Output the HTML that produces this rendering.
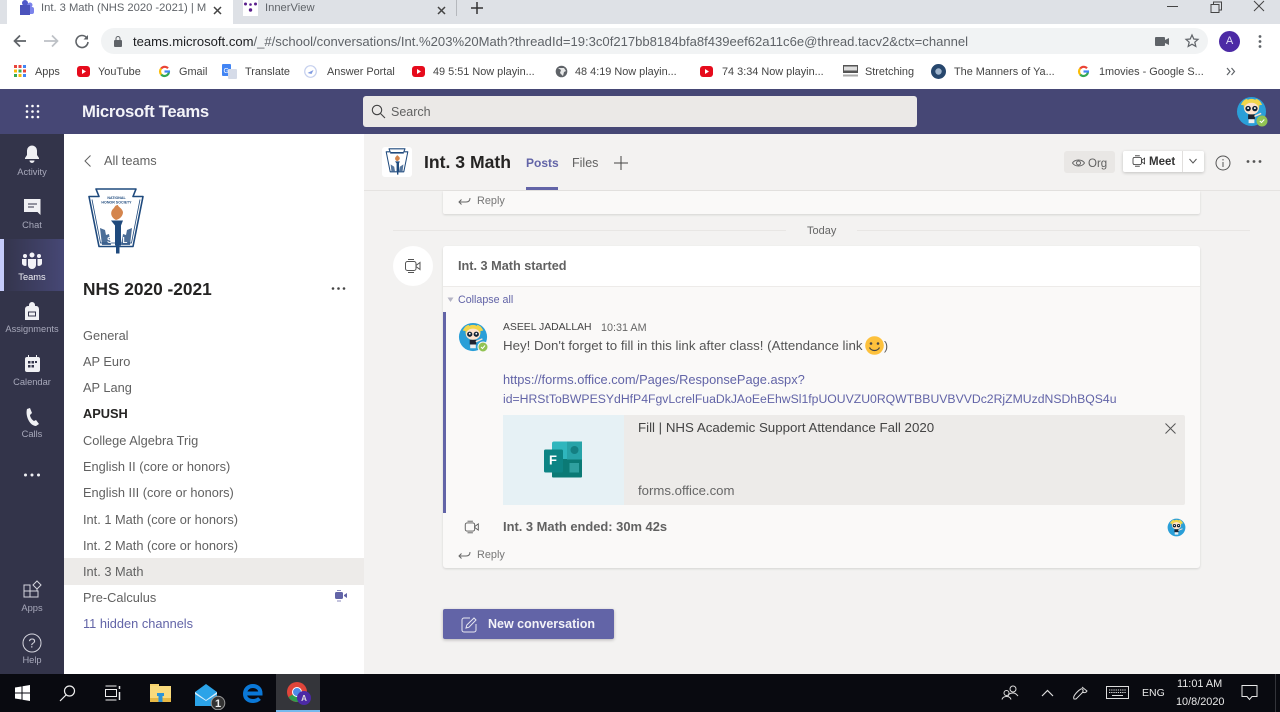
<!DOCTYPE html>
<html><head><meta charset="utf-8"><title>Int. 3 Math</title>
<style>
html,body{margin:0;padding:0;width:1280px;height:712px;overflow:hidden;background:#f3f2f1}
#r{position:relative;width:1280px;height:712px;overflow:hidden;font-family:"Liberation Sans",sans-serif;filter:blur(.35px)}
#r div,#r span.t,#r svg{position:absolute}
.t{position:absolute;white-space:nowrap;line-height:16px;font-size:12px;color:#444}
.c{transform:translateX(-50%);font-size:9.300px;color:#a8a9bb;line-height:12px}
.ch{font-size:12.800px;color:#616161;left:83px}
.bm{font-size:10.900px;color:#444;top:64px}
</style></head><body><div id="r">
<svg width="0" height="0"><defs>
<symbol id="bub" viewBox="0 0 32 32">
<circle cx="16" cy="16" r="15" fill="#2a9fd8"/>
<path d="M5 9q3-6 7-6l-2 7zM27 9q-3-6-7-6l2 7z" fill="#f2d64b"/>
<circle cx="16" cy="11" r="8" fill="#f2d64b"/>
<ellipse cx="16" cy="13" rx="7.500" ry="6" fill="#fde3cf"/>
<circle cx="12.500" cy="13" r="2.800" fill="#123"/><circle cx="19.500" cy="13" r="2.800" fill="#123"/>
<circle cx="12.500" cy="12.500" r="1" fill="#fff"/><circle cx="19.500" cy="12.500" r="1" fill="#fff"/>
<rect x="12.500" y="19" width="7" height="5" fill="#1d2230"/><rect x="13" y="24" width="6" height="4" fill="#eee"/>
<path d="M19 21l7-3" stroke="#fde3cf" stroke-width="1.500"/>
</symbol>
<symbol id="cam" viewBox="0 0 20 20">
<rect x="2.500" y="5.500" width="10.500" height="9" rx="2" fill="none" stroke="currentColor" stroke-width="1"/>
<path d="M17 6.500v7l-4-3v-1zM5 3.500h6M5 16.500h6" fill="none" stroke="currentColor" stroke-width="1"/>
</symbol>
<symbol id="reply" viewBox="0 0 14 12"><path d="M13 3c0 3-1.500 4-4 4H2M4.500 4.500L2 7l2.500 2.500" fill="none" stroke="#666" stroke-width="1"/></symbol>
</defs></svg>

<!-- Chrome tab strip -->
<div style="left:0;top:0;width:1280px;height:24px;background:#dee1e6"></div>
<div style="left:7px;top:0;width:226px;height:24px;background:#fff"></div>
<svg style="left:18px;top:0" width="16" height="17" viewBox="0 0 16 17"><circle cx="12" cy="5" r="2.500" fill="#7b83eb"/><rect x="8" y="7" width="8" height="7" rx="2" fill="#7b83eb"/><circle cx="7" cy="3" r="3" fill="#5059c9"/><rect x="2" y="5" width="10" height="10" fill="#4b53bc"/></svg>
<span class="t" style="left:41px;top:0;font-size:11.200px;color:#5f6368;width:165px;overflow:hidden">Int. 3 Math (NHS 2020 -2021) | M</span>
<svg style="left:212px;top:5px" width="11" height="11"><path d="M2 2l7 7M9 2l-7 7" stroke="#444" stroke-width="1.500"/></svg>
<div style="left:243px;top:0;width:15px;height:16px;background:#fff"></div>
<svg style="left:243px;top:1px" width="15" height="13"><circle cx="7.500" cy="9" r="1.700" fill="#5b1f8c"/><circle cx="2.500" cy="3" r="1.500" fill="#5b1f8c"/><circle cx="12.500" cy="3" r="1.500" fill="#5b1f8c"/><circle cx="7.500" cy="3.500" r="1.300" fill="#5b1f8c"/></svg>
<span class="t" style="left:265px;top:0;font-size:11.200px;color:#5f6368">InnerView</span>
<svg style="left:436px;top:5px" width="11" height="11"><path d="M2 2l7 7M9 2l-7 7" stroke="#444" stroke-width="1.500"/></svg>
<div style="left:456px;top:0;width:1px;height:16px;background:#b5b8bd"></div>
<svg style="left:470px;top:1px" width="14" height="14"><path d="M7 1v12M1 7h12" stroke="#333" stroke-width="1.500"/></svg>
<svg style="left:1165px;top:0" width="110" height="14" fill="none" stroke="#444"><path d="M2 6.500h11"/><path d="M46 4.500h8v8h-8zM48.500 4.500V2h8v8H54"/><path d="M89 1l10 10M99 1L89 11"/></svg>

<!-- toolbar -->
<div style="left:0;top:24px;width:1280px;height:65px;background:#fff"></div>
<svg style="left:10px;top:31px" width="60" height="20" fill="none" stroke-width="1.700"><path d="M16 10H5M10 4.500L4.500 10 10 15.500" stroke="#5f6368"/><path d="M34 10h13M42 4.500l5.500 5.500-5.500 5.500" stroke="#bdc1c6"/></svg>
<svg style="left:72px;top:33px" width="20" height="18" fill="none" stroke="#5f6368" stroke-width="1.600"><path d="M14.500 4.500A6 6 0 1 0 16 9"/><path d="M16 2v4.500h-4.500z" fill="#5f6368" stroke="none"/></svg>
<div style="left:101px;top:28px;width:1107px;height:26px;background:#f1f3f4;border-radius:13px"></div>
<svg style="left:113px;top:36px" width="10" height="11" fill="#5f6368"><rect x="1" y="4" width="8" height="7" rx="1"/><path d="M3 4V2.500a2 2 0 0 1 4 0V4" fill="none" stroke="#5f6368"/></svg>
<span class="t" style="left:133px;top:34px;font-size:13.070px;color:#5f6368"><span style="color:#202124">teams.microsoft.com</span>/_#/school/conversations/Int.%203%20Math?threadId=19:3c0f217bb8184bfa8f439eef62a11c6e@thread.tacv2&amp;ctx=channel</span>
<svg style="left:1155px;top:36px" width="15" height="11" fill="#5f6368"><rect x="0" y="1" width="10" height="9" rx="1"/><path d="M10 4l4-2v7l-4-2z"/></svg>
<svg style="left:1184px;top:33px" width="16" height="16" fill="none" stroke="#5f6368" stroke-width="1.200"><path d="M8 2l1.800 4 4.200.4-3.200 2.800 1 4.200L8 11.200 4.200 13.400l1-4.200L2 6.400 6.200 6z"/></svg>
<div style="left:1219px;top:31px;width:21px;height:21px;border-radius:50%;background:#4c2aa5;color:#e0dcf5;font-size:11px;line-height:21px;text-align:center">A</div>
<svg style="left:1258px;top:34px" width="4" height="15" fill="#5f6368"><circle cx="2" cy="2.500" r="1.400"/><circle cx="2" cy="7.500" r="1.400"/><circle cx="2" cy="12.500" r="1.400"/></svg>

<!-- bookmarks -->
<svg style="left:14px;top:65px" width="12" height="12"><g fill="#e8453c"><rect width="3" height="3"/><rect x="4.500" width="3" height="3"/></g><rect x="9" width="3" height="3" fill="#4285f4"/><rect y="4.500" width="3" height="3" fill="#fbbc05"/><rect x="4.500" y="4.500" width="3" height="3" fill="#34a853"/><rect x="9" y="4.500" width="3" height="3" fill="#e8453c"/><rect y="9" width="3" height="3" fill="#34a853"/><rect x="4.500" y="9" width="3" height="3" fill="#fbbc05"/><rect x="9" y="9" width="3" height="3" fill="#4285f4"/></svg>
<span class="t bm" style="left:35px">Apps</span>
<svg style="left:77px;top:66px" width="13" height="11"><rect width="13" height="11" rx="3" fill="#e60b1c"/><path d="M5 3l4 2.500L5 8z" fill="#fff"/></svg>
<span class="t bm" style="left:98px">YouTube</span>
<svg style="left:158px;top:65px" width="13" height="13" fill="none" stroke-width="2.200" viewBox="0 0 13 13"><path d="M11 6.500a4.500 4.500 0 0 1-7.800 3" stroke="#34a853"/><path d="M3.200 9.500a4.500 4.500 0 0 1 0-6" stroke="#fbbc05"/><path d="M3.200 3.500a4.500 4.500 0 0 1 6.800-.3" stroke="#ea4335"/><path d="M6.500 6.500H12" stroke="#4285f4"/></svg>
<span class="t bm" style="left:179px">Gmail</span>
<svg style="left:222px;top:64px" width="15" height="15"><rect width="9" height="12" rx="1" fill="#4285f4"/><rect x="6" y="5" width="9" height="10" rx="1" fill="#d5dbe8"/><text x="1.500" y="9" font-size="7" fill="#fff" font-family="Liberation Sans">G</text></svg>
<span class="t bm" style="left:245px">Translate</span>
<svg style="left:304px;top:65px" width="13" height="13" fill="none"><circle cx="6.500" cy="6.500" r="5.800" stroke="#c5d0ee" stroke-width="1.200"/><path d="M3.500 8l6-3-2 4z" fill="#7f9ae0"/></svg>
<span class="t bm" style="left:327px">Answer Portal</span>
<svg style="left:412px;top:66px" width="13" height="11"><rect width="13" height="11" rx="3" fill="#e60b1c"/><path d="M5 3l4 2.500L5 8z" fill="#fff"/></svg>
<span class="t bm" style="left:433px">49 5:51 Now playin...</span>
<svg style="left:555px;top:65px" width="13" height="13"><circle cx="6.500" cy="6.500" r="5.800" fill="#5f6368"/><path d="M3 3l3 2-1 3 3 3 1-4 2-1-2-3z" fill="#fff" opacity=".85"/></svg>
<span class="t bm" style="left:575px">48 4:19 Now playin...</span>
<svg style="left:700px;top:66px" width="13" height="11"><rect width="13" height="11" rx="3" fill="#e60b1c"/><path d="M5 3l4 2.500L5 8z" fill="#fff"/></svg>
<span class="t bm" style="left:722px">74 3:34 Now playin...</span>
<svg style="left:843px;top:65px" width="15" height="12"><rect width="15" height="8" fill="#555"/><rect x="1" y="1.500" width="13" height="4" fill="#ddd"/><rect y="9.500" width="15" height="2" fill="#aaa"/></svg>
<span class="t bm" style="left:865px">Stretching</span>
<svg style="left:931px;top:64px" width="15" height="15"><circle cx="7.500" cy="7.500" r="7.500" fill="#27476d"/><circle cx="7.500" cy="7.500" r="3.200" fill="#9fb4cc"/></svg>
<span class="t bm" style="left:954px">The Manners of Ya...</span>
<svg style="left:1077px;top:65px" width="13" height="13" fill="none" stroke-width="2.200" viewBox="0 0 13 13"><path d="M11 6.500a4.500 4.500 0 0 1-7.800 3" stroke="#34a853"/><path d="M3.200 9.500a4.500 4.500 0 0 1 0-6" stroke="#fbbc05"/><path d="M3.200 3.500a4.500 4.500 0 0 1 6.800-.3" stroke="#ea4335"/><path d="M6.500 6.500H12" stroke="#4285f4"/></svg>
<span class="t bm" style="left:1099px">1movies - Google S...</span>
<svg style="left:1226px;top:67px" width="10" height="9" fill="none" stroke="#5f6368" stroke-width="1.200"><path d="M1 1l3 3.500L1 8M5.500 1l3 3.500L5.500 8"/></svg>

<!-- Teams header -->
<div style="left:0;top:89px;width:1280px;height:45px;background:#464775"></div>
<svg style="left:25px;top:104px" width="15" height="15" fill="#fff"><circle cx="2" cy="2" r="1.300"/><circle cx="7.500" cy="2" r="1.300"/><circle cx="13" cy="2" r="1.300"/><circle cx="2" cy="7.500" r="1.300"/><circle cx="7.500" cy="7.500" r="1.300"/><circle cx="13" cy="7.500" r="1.300"/><circle cx="2" cy="13" r="1.300"/><circle cx="7.500" cy="13" r="1.300"/><circle cx="13" cy="13" r="1.300"/></svg>
<span class="t" style="left:82px;top:104px;font-size:16.700px;font-weight:bold;color:#f3f3f8;letter-spacing:-.3px">Microsoft Teams</span>
<div style="left:363px;top:96px;width:554px;height:31px;background:#ebe9e7;border-radius:3px"></div>
<svg style="left:371px;top:104px" width="15" height="15" fill="none" stroke="#444" stroke-width="1.100"><circle cx="6" cy="6" r="4.700"/><path d="M9.500 9.500l4.500 4.500"/></svg>
<span class="t" style="left:391px;top:104px;font-size:12.500px;color:#616161">Search</span>
<svg style="left:1236px;top:96px" width="32" height="32"><use href="#bub" width="31" height="31"/><circle cx="26" cy="25" r="5.500" fill="#92c353"/><path d="M23.800 25l1.700 1.500 2.800-3" stroke="#fff" fill="none"/></svg>

<!-- left rail -->
<div style="left:0;top:134px;width:64px;height:540px;background:#33344a"></div>
<div style="left:0;top:239px;width:64px;height:52px;background:linear-gradient(90deg,#33344a,#464775)"></div>
<div style="left:0;top:239px;width:4px;height:52px;background:#c5cbfa"></div>
<svg style="left:22px;top:144px" width="20" height="20" fill="#f0f0f4"><path d="M10 1.500a5 5 0 0 0-5 5V11l-2 3v1h14v-1l-2-3V6.500a5 5 0 0 0-5-5zM7.500 16.500a2.500 2.500 0 0 0 5 0z"/></svg>
<span class="t c" style="left:32px;top:166px">Activity</span>
<svg style="left:22px;top:198px" width="20" height="20" fill="#f0f0f4"><path d="M2 1h16.500v16l-3-3H2z"/><path d="M6 6h9M6 9h6" stroke="#33344a" stroke-width="1"/></svg>
<span class="t c" style="left:32px;top:219px">Chat</span>
<svg style="left:21px;top:252px" width="22" height="17" fill="#f4f4f8"><circle cx="11" cy="3" r="2.500"/><circle cx="4" cy="4" r="2"/><circle cx="18" cy="4" r="2"/><path d="M7 7h8v6a4 4 0 0 1-8 0zM1 7h4.500v6.500A3 3 0 0 1 1 10.500zM21 7h-4.500v6.500A3 3 0 0 0 21 10.500z"/></svg>
<span class="t c" style="left:32px;top:271px;color:#f1f1f5">Teams</span>
<svg style="left:24px;top:302px" width="16" height="20" fill="#f0f0f4"><path d="M5 4V3a3 3 0 0 1 6 0v1h.5A3 3 0 0 1 15 7v11H1V7a3 3 0 0 1 3-3z"/><rect x="4.500" y="10" width="7" height="4" fill="none" stroke="#33344a"/></svg>
<span class="t c" style="left:32px;top:323px">Assignments</span>
<svg style="left:24px;top:355px" width="17" height="18" fill="#f0f0f4"><path d="M3 2h1V0h1v2h7V0h1v2h1a2 2 0 0 1 2 2v11a2 2 0 0 1-2 2H3a2 2 0 0 1-2-2V4a2 2 0 0 1 2-2z"/><g fill="#33344a"><rect x="4" y="6" width="2.500" height="2.500"/><rect x="7.500" y="6" width="2.500" height="2.500"/><rect x="11" y="6" width="2" height="2"/><rect x="4" y="10" width="2.500" height="2.500"/><rect x="7.500" y="10" width="2.500" height="2.500"/></g></svg>
<span class="t c" style="left:32px;top:376px">Calendar</span>
<svg style="left:25px;top:408px" width="14" height="18" fill="#f0f0f4"><path d="M2 1l3-1 2 5-2 2c0 2 2 5 4 6l2-1 3 4-3 2C5 18 0 8 2 1z"/></svg>
<span class="t c" style="left:32px;top:428px">Calls</span>
<svg style="left:23px;top:472px" width="18" height="6" fill="#f0f0f4"><circle cx="2.500" cy="3" r="1.500"/><circle cx="9" cy="3" r="1.500"/><circle cx="15.500" cy="3" r="1.500"/></svg>
<svg style="left:22px;top:580px" width="20" height="20" fill="none" stroke="#d5d5de" stroke-width="1"><path d="M2 5h6v6H2zM8 11h8v6H8zM2 11h6v6H2zM8 5v6h7V9"/><path d="M15 1l4 4-4 4-4-4z"/></svg>
<span class="t c" style="left:32px;top:602px">Apps</span>
<svg style="left:22px;top:633px" width="20" height="20" fill="none" stroke="#d5d5de" stroke-width="1"><circle cx="10" cy="10" r="9"/><text x="10" y="14.500" text-anchor="middle" font-size="13" fill="#d5d5de" stroke="none" font-family="Liberation Sans">?</text></svg>
<span class="t c" style="left:32px;top:654px">Help</span>

<!-- sidebar -->
<div style="left:64px;top:134px;width:300px;height:540px;background:#fff"></div>
<svg style="left:83px;top:154px" width="10" height="14" fill="none" stroke="#616161"><path d="M7.500 1.500L2 7l5.500 5.500"/></svg>
<span class="t" style="left:104px;top:153px;font-size:12.800px;color:#616161">All teams</span>
<svg style="left:87px;top:187px" width="58" height="70" viewBox="87 187 58 70">
<path d="M96 189h40l-3 7.500h10l-10 50H99l-10-50h10z" fill="#fff" stroke="#1f4a7d" stroke-width="1.600" stroke-linejoin="round"/>
<path d="M92 199.500l8.500 43.500h31l8.500-43.500" fill="none" stroke="#1f4a7d" stroke-width=".8"/>
<text x="116.500" y="199" font-size="3.600" font-weight="bold" text-anchor="middle" fill="#1f4a7d" font-family="Liberation Sans">NATIONAL</text>
<text x="116.500" y="203.500" font-size="3.600" font-weight="bold" text-anchor="middle" fill="#1f4a7d" font-family="Liberation Sans">HONOR SOCIETY</text>
<path d="M116 220c-6-3-6-9-2-12 1-2 2-3 4-3 0 2 4 3 5 7 0 4-3 7-7 8z" fill="#d4854d"/>
<path d="M111 220.500h12l-2 5v20h-1.500v8h-3.500v-8H115v-20z" fill="#1f4a7d"/>
<path d="M100 228l5 2 1 5 3-1 2 11h-9zM132 228l-5 2-1 5-3-1-2 11h9z" fill="#1f4a7d" opacity=".8"/>
<text x="107" y="243" font-size="8" fill="#fff" font-family="Liberation Sans" font-weight="bold">S</text>
<text x="122.500" y="243" font-size="8" fill="#fff" font-family="Liberation Sans" font-weight="bold">L</text>
</svg>
<span class="t" style="left:83px;top:280px;font-size:17.300px;font-weight:bold;color:#252423;line-height:18px">NHS 2020 -2021</span>
<svg style="left:331px;top:286px" width="15" height="5" fill="#444"><circle cx="2" cy="2.500" r="1.300"/><circle cx="7.500" cy="2.500" r="1.300"/><circle cx="13" cy="2.500" r="1.300"/></svg>
<span class="t ch" style="top:328px">General</span>
<span class="t ch" style="top:354px">AP Euro</span>
<span class="t ch" style="top:380px">AP Lang</span>
<span class="t ch" style="top:406px;font-weight:bold;color:#252423">APUSH</span>
<span class="t ch" style="top:433px">College Algebra Trig</span>
<span class="t ch" style="top:459px">English II (core or honors)</span>
<span class="t ch" style="top:485px">English III (core or honors)</span>
<span class="t ch" style="top:512px">Int. 1 Math (core or honors)</span>
<span class="t ch" style="top:538px">Int. 2 Math (core or honors)</span>
<div style="left:64px;top:558px;width:300px;height:27px;background:#edebe9"></div>
<span class="t ch" style="top:564px">Int. 3 Math</span>
<span class="t ch" style="top:590px">Pre-Calculus</span>
<svg style="left:334px;top:589px" width="14" height="14" fill="#6264a7"><rect x="1" y="3" width="8" height="7" rx="1.500"/><path d="M10 6l3-2v5l-3-2z"/><path d="M3 1.500h4M3 12h4" stroke="#6264a7" stroke-width=".8"/></svg>
<span class="t ch" style="top:616px;color:#6264a7">11 hidden channels</span>

<!-- main header -->
<div style="left:364px;top:190px;width:916px;height:1px;background:#e5e3e1"></div>
<div style="left:382px;top:147px;width:30px;height:30px;background:#fff;border-radius:3px"></div>
<svg style="left:385px;top:148px" width="24" height="28" viewBox="87 187 58 70">
<path d="M96 189h40l-3 7.500h10l-10 50H99l-10-50h10z" fill="#fff" stroke="#1f4a7d" stroke-width="2.600" stroke-linejoin="round"/>
<path d="M99 199h34" stroke="#1f4a7d" stroke-width="4"/>
<path d="M116 220c-6-3-6-9-2-12 1-2 2-3 4-3 0 2 4 3 5 7 0 4-3 7-7 8z" fill="#d4854d"/>
<path d="M111 220.500h12l-2 5v20h-1.500v8h-3.500v-8H115v-20z" fill="#1f4a7d"/>
<path d="M100 228l9 6 2 11h-9zM132 228l-9 6-2 11h9z" fill="#1f4a7d" opacity=".75"/>
</svg>
<span class="t" style="left:424px;top:153px;font-size:17.600px;font-weight:bold;color:#252423;line-height:18px">Int. 3 Math</span>
<span class="t" style="left:526px;top:155px;font-size:12px;font-weight:bold;color:#6264a7">Posts</span>
<div style="left:526px;top:187px;width:32px;height:3px;background:#6264a7"></div>
<span class="t" style="left:572px;top:155px;font-size:12.500px;color:#616161">Files</span>
<svg style="left:614px;top:156px" width="14" height="14" stroke="#444"><path d="M7 0v14M0 7h14"/></svg>

<div style="left:1064px;top:151px;width:51px;height:22px;background:#e9e7e5;border-radius:3px"></div>
<svg style="left:1072px;top:157px" width="13" height="12" fill="none" stroke="#666"><path d="M.5 6C3 2 10 2 12.500 6 10 10 3 10 .5 6z"/><circle cx="6.500" cy="6" r="2"/></svg>
<span class="t" style="left:1088px;top:156px;font-size:11.500px;color:#616161">Org</span>
<div style="left:1123px;top:151px;width:81px;height:21px;background:#fff;border-radius:2px;box-shadow:0 1px 3px rgba(0,0,0,.2)"></div>
<div style="left:1182px;top:151px;width:1px;height:21px;background:#e1dfdd"></div>
<svg style="left:1131px;top:153px;color:#333" width="16" height="16"><use href="#cam" width="16" height="16"/></svg>
<span class="t" style="left:1149px;top:154px;font-size:11.500px;font-weight:bold;color:#333">Meet</span>
<svg style="left:1188px;top:158px" width="10" height="7" fill="none" stroke="#555"><path d="M1.500 1l3.500 4 3.500-4"/></svg>
<svg style="left:1215px;top:155px" width="16" height="16" fill="none" stroke="#555"><circle cx="8" cy="8" r="7"/><path d="M8 7v5M8 4v1.500"/></svg>
<svg style="left:1246px;top:159px" width="16" height="5" fill="#555"><circle cx="2" cy="2.500" r="1.400"/><circle cx="8" cy="2.500" r="1.400"/><circle cx="14" cy="2.500" r="1.400"/></svg>

<!-- previous card -->
<div style="left:443px;top:191px;width:757px;height:23px;background:#faf9f8;box-shadow:0 1px 2px rgba(0,0,0,.13);border-radius:0 0 2px 2px"></div>
<svg style="left:457px;top:195px" width="14" height="12"><use href="#reply"/></svg>
<span class="t" style="left:477px;top:193px;font-size:10.900px;color:#777">Reply</span>
<div style="left:393px;top:230px;width:393px;height:1px;background:#e8e6e4"></div>
<div style="left:857px;top:230px;width:393px;height:1px;background:#e8e6e4"></div>
<span class="t" style="left:807px;top:223px;font-size:11px;color:#666">Today</span>

<!-- main card -->
<div style="left:393px;top:246px;width:40px;height:40px;border-radius:50%;background:#fff"></div>
<svg style="left:403px;top:256px;color:#555" width="20" height="20"><use href="#cam" width="20" height="20"/></svg>
<div style="left:443px;top:246px;width:757px;height:322px;background:#faf9f8;border-radius:3px;box-shadow:0 1px 2px rgba(0,0,0,.13)"></div>
<div style="left:443px;top:246px;width:757px;height:40px;background:#fff;border-bottom:1px solid #edebe9;border-radius:3px 3px 0 0"></div>
<span class="t" style="left:458px;top:258px;font-size:12.700px;font-weight:bold;color:#616161">Int. 3 Math started</span>
<svg style="left:447px;top:297px" width="8" height="6"><path d="M.5.500h6L3.500 5z" fill="#b5b5c5"/></svg>
<span class="t" style="left:458px;top:292px;font-size:10.700px;color:#6264a7">Collapse all</span>
<div style="left:443px;top:312px;width:3px;height:201px;background:#6264a7"></div>
<svg style="left:458px;top:322px" width="32" height="32"><use href="#bub" width="30" height="30"/><circle cx="25" cy="25" r="5" fill="#92c353" stroke="#faf9f8" stroke-width="1"/><path d="M23 25l1.500 1.500 2.500-3" stroke="#fff" fill="none"/></svg>
<span class="t" style="left:503px;top:320px;font-size:10.400px;color:#444">ASEEL JADALLAH</span>
<span class="t" style="left:601px;top:320px;font-size:10.800px;color:#666">10:31 AM</span>
<span class="t" style="left:503px;top:338px;font-size:13.300px;color:#555">Hey! Don't forget to fill in this link after class! (Attendance link</span>
<svg style="left:865px;top:336px" width="19" height="19"><circle cx="9.500" cy="9.500" r="9.300" fill="#fdc13c"/><circle cx="6" cy="7.500" r="1.300" fill="#444"/><circle cx="13" cy="7.500" r="1.300" fill="#444"/><path d="M4.500 11.500c2 4 8 4 10 0" fill="none" stroke="#444" stroke-width="1.200"/></svg>
<span class="t" style="left:884px;top:338px;font-size:12.200px;color:#555">)</span>
<span class="t" style="left:503px;top:372px;font-size:12.850px;color:#6264a7">https://forms.office.com/Pages/ResponsePage.aspx?</span>
<span class="t" style="left:503px;top:391px;font-size:12.230px;color:#6264a7">id=HRStToBWPESYdHfP4FgvLcrelFuaDkJAoEeEhwSl1fpUOUVZU0RQWTBBUVBVVDc2RjZMUzdNSDhBQS4u</span>
<div style="left:503px;top:415px;width:682px;height:90px;background:#edebe9;border-radius:2px"></div>
<div style="left:503px;top:415px;width:121px;height:90px;background:#e6f1f5"></div>
<svg style="left:543px;top:441px" width="40" height="38" viewBox="0 0 40 38"><rect x="9" y="0.500" width="30" height="36" rx="2" fill="#2fb6bd"/><rect x="9" y="18" width="30" height="18.500" rx="1" fill="#0b7a75"/><rect x="24" y="0.500" width="15" height="18" fill="#27a3a8"/><circle cx="31.500" cy="9" r="4" fill="#147f82"/><rect x="26.500" y="22" width="9.500" height="9.500" fill="#2fa09f"/><rect x="1" y="8.500" width="19" height="23" rx="1.500" fill="#0d8484"/><text x="6" y="23.500" font-size="13" font-weight="bold" fill="#fff" font-family="Liberation Sans">F</text></svg>
<span class="t" style="left:638px;top:420px;font-size:13.300px;color:#444">Fill | NHS Academic Support Attendance Fall 2020</span>
<span class="t" style="left:638px;top:483px;font-size:13.200px;color:#666">forms.office.com</span>
<svg style="left:1165px;top:423px" width="11" height="11" stroke="#555"><path d="M.5.500l10 10M10.500.500l-10 10"/></svg>
<svg style="left:463px;top:518px;color:#555" width="18" height="18"><use href="#cam" width="18" height="18"/></svg>
<span class="t" style="left:503px;top:519px;font-size:12.900px;font-weight:bold;color:#616161">Int. 3 Math ended: 30m 42s</span>
<svg style="left:1167px;top:518px" width="19" height="19"><use href="#bub" width="19" height="19"/></svg>
<svg style="left:457px;top:549px" width="14" height="12"><use href="#reply"/></svg>
<span class="t" style="left:477px;top:547px;font-size:10.900px;color:#777">Reply</span>

<!-- new conversation -->
<div style="left:443px;top:609px;width:171px;height:30px;background:#6264a7;border-radius:2px;box-shadow:0 1px 3px rgba(0,0,0,.25)"></div>
<svg style="left:461px;top:616px" width="17" height="17" fill="none" stroke="#e8e8f2"><path d="M9 2H3a2 2 0 0 0-2 2v10a2 2 0 0 0 2 2h10a2 2 0 0 0 2-2V8"/><path d="M5 12l.8-3L13 2l2 2-7 7.200z"/></svg>
<span class="t" style="left:488px;top:616px;font-size:12.500px;font-weight:bold;color:#f3f3f8">New conversation</span>

<!-- taskbar -->
<div style="left:0;top:674px;width:1280px;height:38px;background:#090a10"></div>
<div style="left:276px;top:674px;width:44px;height:38px;background:#34353a"></div>
<div style="left:276px;top:710px;width:44px;height:2px;background:#76b9ed"></div>
<svg style="left:15px;top:685px" width="15" height="16" fill="#fff"><path d="M0 2.500l6.500-1V7.500H0zM7.500 1.300L15 0v7.500H7.500zM0 8.500h6.500v6L0 13.500zM7.500 8.500H15V16l-7.500-1.200z"/></svg>
<svg style="left:59px;top:685px" width="17" height="17" fill="none" stroke="#eee" stroke-width="1.200"><circle cx="10.500" cy="6" r="5"/><path d="M7 10l-6 6"/></svg>
<svg style="left:104px;top:685px" width="17" height="16" fill="none" stroke="#eee"><path d="M1.500 1h11M1.500 15h11M1.500 4.500h11v7h-11z"/><path d="M15.500 1v3M15.500 7v8" stroke-width="1.500"/></svg>
<svg style="left:150px;top:684px" width="21" height="18"><rect x="0" y="0" width="9" height="4" fill="#f6d26b"/><rect y="2" width="21" height="16" fill="#f9da7c"/><rect x="0" y="14" width="21" height="4" fill="#e8b945"/><rect x="7" y="9" width="7" height="3" fill="#2b94d9"/><rect x="8.500" y="11" width="4" height="7" fill="#2b94d9"/></svg>
<svg style="left:195px;top:683px" width="32" height="27"><path d="M0 9L11 1l11 8v14H0z" fill="#2ba3e8"/><path d="M0 9l11 8 11-8v2l-11 7L0 11z" fill="#d5ecfb"/><circle cx="23" cy="20" r="6.800" fill="#333" stroke="#999"/><text x="23" y="24" font-size="11" text-anchor="middle" fill="#eee" font-family="Liberation Sans" font-weight="bold">1</text></svg>
<svg style="left:243px;top:684px" width="20" height="19" fill="none" stroke="#0a78d7" stroke-width="4"><path d="M3 9.500h14.500C17.500 4.500 14 2 10 2 5 2 2 5.500 2 10s3.500 7 8 7c3 0 5-1 6.500-2.500"/></svg>
<svg style="left:287px;top:682px" width="24" height="24"><circle cx="10" cy="10" r="10" fill="#e0453a"/><path d="M10 10L1.500 15A10 10 0 0 0 13 19.500z" fill="#2e9d4e"/><path d="M10 10l9.500 0A10 10 0 0 1 13 19.500z" fill="#f5c22c"/><circle cx="10" cy="10" r="4.500" fill="#4d8be8" stroke="#fff"/><circle cx="17" cy="16" r="7" fill="#4c2aa5"/><text x="17" y="19" text-anchor="middle" font-size="8" fill="#ddd" font-family="Liberation Sans" font-weight="bold">A</text></svg>
<svg style="left:1001px;top:685px" width="18" height="15" fill="none" stroke="#ddd"><circle cx="12" cy="4" r="3"/><path d="M7 12c0-3 2-4 5-4s4 2 5 3"/><circle cx="5.500" cy="8" r="2.500"/><path d="M1 14.500c.5-2 2-3 4.500-3s4 1 4.500 3"/></svg>
<svg style="left:1041px;top:689px" width="13" height="8" fill="none" stroke="#ddd" stroke-width="1.200"><path d="M1 7l5.500-5.500L12 7"/></svg>
<svg style="left:1072px;top:684px" width="17" height="18" fill="none" stroke="#ddd"><path d="M2 15c-2-3 5-9 7-10 2-1 3 2 1 4-2 2-6 6-6 6zM10 3l5 4c-1 2-3 2-5 1"/></svg>
<svg style="left:1106px;top:686px" width="23" height="13" fill="none" stroke="#ddd"><rect x=".5" y=".5" width="22" height="12"/><path d="M3 4h17M3 6.500h17" stroke-dasharray="1.300 .9"/><path d="M6 9.500h11"/></svg>
<span class="t" style="left:1142px;top:685px;font-size:10.500px;color:#e8e8e8">ENG</span>
<span class="t" style="left:1177px;top:676px;font-size:10.900px;color:#e8e8e8">11:01 AM</span>
<span class="t" style="left:1176px;top:694px;font-size:10.900px;color:#e8e8e8">10/8/2020</span>
<svg style="left:1241px;top:685px" width="17" height="16" fill="none" stroke="#e8e8e8"><path d="M1 .500h15v11h-5L8.500 14.500 6 11.500H1z"/></svg>
<div style="left:1275px;top:674px;width:1px;height:38px;background:#33343a"></div>
</div></body></html>
